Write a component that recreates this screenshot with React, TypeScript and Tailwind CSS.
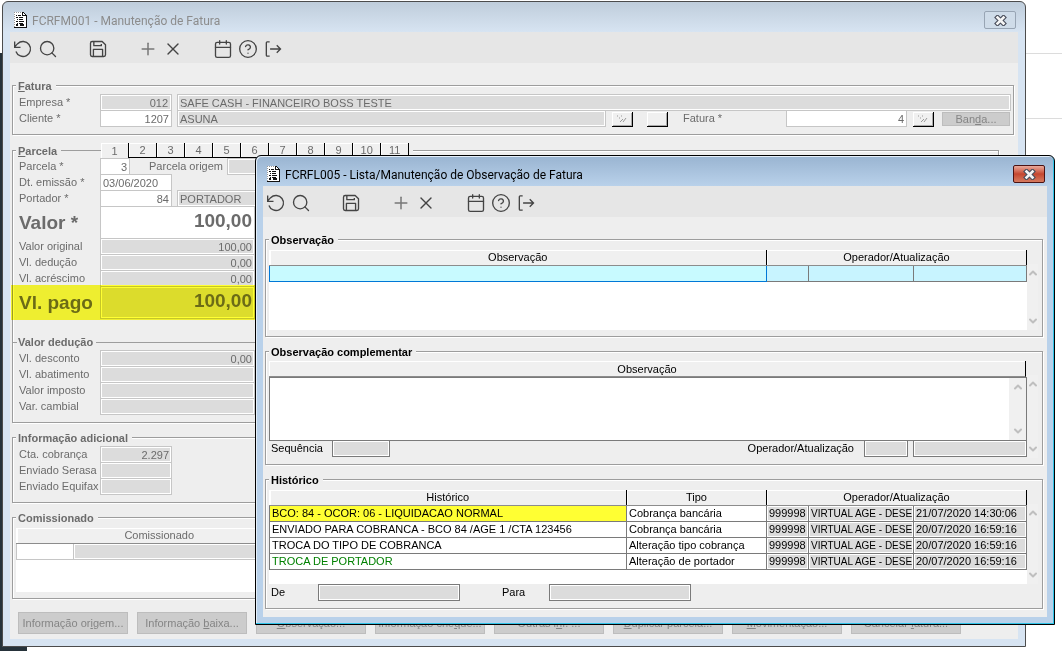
import type { ReactNode } from "react";
import { Calendar, ChevronDown, ChevronUp, CircleHelp, Plus, Search, X } from "lucide-react";
import clsx from "clsx";

const history = [
  { text: "BCO: 84 - OCOR: 06 - LIQUIDACAO NORMAL", type: "Cobrança bancária", date: "21/07/2020 14:30:06", color: "bg-[#ffff33]" },
  { text: "ENVIADO PARA COBRANCA - BCO 84 /AGE 1 /CTA 123456", type: "Cobrança bancária", date: "20/07/2020 16:59:16", color: "bg-white" },
  { text: "TROCA DO TIPO DE COBRANCA", type: "Alteração tipo cobrança", date: "20/07/2020 16:59:16", color: "bg-white" },
  { text: "TROCA DE PORTADOR", type: "Alteração de portador", date: "20/07/2020 16:59:16", color: "bg-white text-[#008000]" },
];

const tabs = [1, 2, 3, 4, 5, 6, 7, 8, 9, 10, 11];

const footerButtons = [
  ["Informação or", "i", "gem..."],
  ["Informação ", "b", "aixa..."],
  ["", "O", "bservação..."],
  ["Informação che", "q", "ue..."],
  ["Outras i", "n", "f. ..."],
  ["", "D", "uplicar parcela..."],
  ["", "M", "ovimentação..."],
  ["Cancelar ", "f", "atura..."],
];

function DocIcon() {
  return (
    <svg width="13" height="16" viewBox="0 0 13 16" shapeRendering="crispEdges">
      <path d="M0 0h9l3 3v12H0z" fill="#fff" />
      <path d="M0 15h13M12.5 3v12M9 .5h1M10 1.5h1M11 2.5h1M8.500 0v4M8 3.500h4" stroke="#111" fill="none" />
      <path d="M0 .5h8M.5 0v15" stroke="#999" strokeDasharray="1 1" />
      <path d="M2 3.500h1M4 3.500h3M2 5.500h2M5 5.500h4M3 7.500h1M5 7.500h4M2 9.500h2M5 9.500h5M3 11.500h1M5 11.500h4M2 13h2M6 13h4" stroke="#111" strokeWidth="1.500" />
    </svg>
  );
}

function UndoIcon() {
  return (
    <svg width="20" height="20" viewBox="0 0 24 24" fill="none" stroke="currentColor" strokeWidth="1.6">
      <path d="M2 3v7h7M3.5 15a9 9 0 1 0 2.100-9.400L2 9.500" />
    </svg>
  );
}

function SaveIcon() {
  return (
    <svg width="20" height="20" viewBox="0 0 24 24" fill="none" stroke="currentColor" strokeWidth="1.6" strokeLinejoin="round">
      <path d="M5 3h12l4 4v12a2 2 0 0 1-2 2H5a2 2 0 0 1-2-2V5a2 2 0 0 1 2-2zM17.500 21v-8.500h-11V21M7 3v5h9V6" />
    </svg>
  );
}

function ExitIcon() {
  return (
    <svg width="20" height="20" viewBox="0 0 24 24" fill="none" stroke="currentColor" strokeWidth="1.6">
      <path d="M8 3.500H5a1 1 0 0 0-1 1v15a1 1 0 0 0 1 1h3M8.500 12H21M16.500 7.500L21 12l-4.500 4.500" />
    </svg>
  );
}

function CloseGlyph() {
  return (
    <svg width="13" height="11" viewBox="0 0 13 11" fill="none">
      <path d="M3.500 2.500l6 6M9.500 2.500l-6 6" stroke="#4a4f5c" strokeWidth="4.800" strokeLinecap="square" />
      <path d="M3.500 2.500l6 6M9.500 2.500l-6 6" stroke="#f4f4f4" strokeWidth="2.600" strokeLinecap="square" />
    </svg>
  );
}

function ToolButton({ label, className, children }: { label: string; className?: string; children: ReactNode }) {
  return (
    <button type="button" aria-label={label} className={clsx("flex h-6 w-[25px] items-center justify-center text-[#444]", className)}>
      {children}
    </button>
  );
}

function Toolbar() {
  return (
    <div className="flex h-[31px] items-center bg-[#e6e6e6] pt-0.5">
      <ToolButton label="Desfazer"><UndoIcon /></ToolButton>
      <ToolButton label="Pesquisar"><Search size={20} strokeWidth={1.6} /></ToolButton>
      <ToolButton label="Salvar" className="ml-[25px]"><SaveIcon /></ToolButton>
      <ToolButton label="Incluir" className="ml-[25px] text-[#777]"><Plus size={20} strokeWidth={1.8} /></ToolButton>
      <ToolButton label="Excluir"><X size={20} strokeWidth={1.6} /></ToolButton>
      <ToolButton label="Calendário" className="ml-[25px]"><Calendar size={20} strokeWidth={1.6} /></ToolButton>
      <ToolButton label="Ajuda"><CircleHelp size={20} strokeWidth={1.6} /></ToolButton>
      <ToolButton label="Sair"><ExitIcon /></ToolButton>
    </div>
  );
}

function TitleBar({ title, active }: { title: string; active?: boolean }) {
  return (
    <div className="flex h-[30px] items-center pt-1.5 pr-0.5 pl-1">
      <DocIcon />
      <h1 className={clsx("ml-[5px] flex-1 pt-0.5 font-[Roboto,sans-serif] text-[12px] leading-4", active ? "text-black" : "text-[#8c8c8c]")}>{title}</h1>
      <button
        type="button"
        aria-label="Fechar"
        className={clsx(
          "flex h-[18px] w-8 items-center justify-center rounded-[2px] border",
          active
            ? "border-[#4b1313] bg-linear-to-b from-[#e9a99b] via-[#c4462f] to-[#d67a5f]"
            : "border-[#98a5b4] bg-[#cfdce9]"
        )}
      >
        <CloseGlyph />
      </button>
    </div>
  );
}

type FieldProps = { id: string; label?: string; value?: string; className?: string };

function Field({ id, label, value = "", className }: FieldProps) {
  return (
    <input
      id={id}
      aria-label={label}
      readOnly
      defaultValue={value}
      className={clsx("h-[17px] min-w-0 shrink-0 border px-[2px] outline-none", className)}
    />
  );
}

const grey = "border-[#c6c6c6] bg-[#dcdcdc] shadow-[inset_0_0_0_1px_#fff]";
const white = "border-[#c6c6c6] bg-white";
const darkGrey = "border-[#7a7a7a] bg-[#dcdcdc] shadow-[inset_0_0_0_1px_#fff]";

function Label({ id, children, className }: { id: string; children: ReactNode; className?: string }) {
  return (
    <label htmlFor={id} className={clsx("shrink-0 leading-4 whitespace-nowrap", className)}>
      {children}
    </label>
  );
}

function Row({ id, label, value, width = "w-[155px]", tone = grey }: { id: string; label: string; value?: string; width?: string; tone?: string }) {
  return (
    <div className="flex h-4">
      <Label id={id} className="w-[81px]">{label}</Label>
      <Field id={id} value={value} className={clsx("text-right", width, tone)} />
    </div>
  );
}

function Group({ legend, className, children }: { legend: ReactNode; className?: string; children: ReactNode }) {
  return (
    <fieldset className={clsx("min-w-0 border border-[#9d9d9d] pl-[3px] shadow-[1px_1px_0_#fff,inset_1px_1px_0_#fff]", className)}>
      <legend className="flex h-[15px] items-center bg-[#eee] pr-1 pl-[2px] font-bold">{legend}</legend>
      {children}
    </fieldset>
  );
}

function LookupButton({ blank, className }: { blank?: boolean; className?: string }) {
  return (
    <button
      type="button"
      aria-label={blank ? "Detalhes" : "Consultar"}
      className={clsx("mt-0.5 flex h-[15px] w-[21px] shrink-0 items-center justify-center border-r border-b border-black bg-[#f0f0f0] shadow-[inset_1px_1px_0_#fff,inset_-1px_-1px_0_#aaa]", className)}
    >
      {!blank && (
        <svg width="10" height="8" viewBox="0 0 10 8" stroke="#999">
          <path d="M0 1h1M2 3h1M4 1h1M3 7l3-3M6 7l3-4" strokeWidth="1" />
        </svg>
      )}
    </button>
  );
}

function ScrollArrows({ className }: { className?: string }) {
  return (
    <div className={clsx("flex shrink-0 flex-col items-center justify-between bg-[#f0f0f0] py-[3px] text-[#bfbfbf]", className)}>
      <ChevronUp size={12} strokeWidth={4} />
      <ChevronDown size={12} strokeWidth={4} />
    </div>
  );
}

const th = "h-[15px] border-r border-b border-r-black border-b-[#8c8c8c] bg-[#f0f0f0] p-0 text-center font-normal leading-[14px] shadow-[inset_1px_1px_0_#fff]";
const td = "h-4 overflow-hidden border border-[#7a7a7a] p-0 pl-[2px] leading-[15px] whitespace-nowrap";
const tdGrey = "bg-[#dcdcdc] shadow-[inset_0_0_0_1px_#fff]";

function WindowFrame({ title, active, className, children }: { title: string; active?: boolean; className: string; children: ReactNode }) {
  return (
    <section
      className={clsx(
        "rounded-t-md border px-[7px] pb-[7px]",
        active
          ? "border-black bg-[#b9d1ea] bg-[linear-gradient(#99b4d1,#b9d1ea_30px)] shadow-[inset_-1px_-1px_0_#2fc4e8,inset_1px_1px_0_#e4eef8]"
          : "border-[#4c4c4c] bg-[#d7e4f2] bg-[linear-gradient(#bfcddb,#d7e4f2_30px)]",
        className
      )}
    >
      <TitleBar title={title} active={active} />
      <div className="bg-[#eee]">
        <Toolbar />
        {children}
      </div>
    </section>
  );
}

function InvoiceWindow() {
  return (
    <WindowFrame title="FCRFM001 - Manutenção de Fatura" className="relative mt-px mr-9 ml-0.5 overflow-hidden text-[#6b6b6b]">
      <form className="pt-[15px] pr-1 pb-[5px] pl-0.5">
        <Group legend={<span><u>F</u>atura</span>} className="pt-px pr-[2px] pb-2">
          <div className="flex h-4 pl-[3px]">
            <Label id="empresa" className="w-[81px]">Empresa *</Label>
            <Field id="empresa" value="012" className={clsx("w-[72px] pr-[3px] text-right", grey)} />
            <Field id="empresa-nome" label="Nome da empresa" value="SAFE CASH - FINANCEIRO BOSS TESTE" className={clsx("ml-[5px] flex-1", grey)} />
          </div>
          <div className="flex h-4 pl-[3px]">
            <Label id="cliente" className="w-[81px]">Cliente *</Label>
            <Field id="cliente" value="1207" className={clsx("w-[72px] text-right", white)} />
            <Field id="cliente-nome" label="Nome do cliente" value="ASUNA" className={clsx("ml-[5px] flex-1", grey)} />
            <LookupButton className="ml-1.5" />
            <LookupButton blank className="ml-3.5" />
            <Label id="fatura" className="ml-[15px] w-[103px]">Fatura *</Label>
            <Field id="fatura" value="4" className={clsx("w-[121px] text-right", white)} />
            <LookupButton className="ml-1.5" />
            <button type="button" className="mt-0.5 mr-px ml-2 h-[14px] w-[68px] border border-[#bdbdbd] bg-[#ccc] leading-3 text-[#858585]">
              Ban<u>d</u>a...
            </button>
          </div>
        </Group>

        <Group
          className="mt-2 mr-[15px] pb-2"
          legend={
            <>
              <span className="pr-1"><u>P</u>arcela</span>
              <span className="h-px w-10 bg-[#9d9d9d]" />
              {tabs.map((tab) => (
                <button
                  key={tab}
                  type="button"
                  className={clsx(
                    "h-[15px] w-7 border-r border-black bg-[#f0f0f0] font-normal leading-[14px] shadow-[inset_1px_1px_0_#fff]",
                    tab > 1 && "border-b"
                  )}
                >
                  {tab}
                </button>
              ))}
            </>
          }
        >
          <div className="pl-[3px]">
            <div className="flex h-4">
              <Label id="parcela" className="w-[81px]">Parcela *</Label>
              <Field id="parcela" value="3" className={clsx("w-[30px] text-right", white)} />
              <Label id="origem" className="w-[97px] pr-1 text-right">Parcela origem</Label>
              <Field id="origem" className={clsx("w-[60px]", grey)} />
            </div>
            <div className="flex h-4">
              <Label id="emissao" className="w-[81px]">Dt. emissão *</Label>
              <Field id="emissao" value="03/06/2020" className={clsx("w-[72px]", white)} />
            </div>
            <div className="flex h-4">
              <Label id="portador" className="w-[81px]">Portador *</Label>
              <Field id="portador" value="84" className={clsx("w-[72px] text-right", white)} />
              <Field id="portador-nome" label="Nome do portador" value="PORTADOR" className={clsx("ml-[5px] w-[120px]", grey)} />
            </div>
            <div className="flex h-8">
              <label htmlFor="valor" className="w-[81px] shrink-0 text-[19px] leading-[34px] font-bold">Valor *</label>
              <input id="valor" readOnly defaultValue="100,00" className={clsx("h-[33px] w-[155px] border px-[2px] pb-1 text-right text-[19px] font-bold", white)} />
            </div>
            <Row id="original" label="Valor original" value="100,00" />
            <Row id="deducao" label="Vl. dedução" value="0,00" />
            <Row id="acrescimo" label="Vl. acréscimo" value="0,00" />
            <div className="relative flex h-8">
              <label htmlFor="pago" className="w-[81px] shrink-0 text-[19px] leading-[34px] font-bold whitespace-nowrap">Vl. pago</label>
              <input id="pago" readOnly defaultValue="100,00" className={clsx("h-[33px] w-[155px] border px-[2px] pb-1 text-right text-[19px] font-bold", grey)} />
              <div className="pointer-events-none absolute -top-px -left-2 h-[35px] w-[245px] bg-[#ffff33] mix-blend-multiply" />
            </div>
          </div>
          <div className="mt-4 -ml-[3px] flex h-4 items-center">
            <span className="h-px w-1 bg-[#9d9d9d]" />
            <h2 className="px-px font-bold">Valor dedução</h2>
            <span className="ml-0.5 h-px flex-1 bg-[#9d9d9d]" />
          </div>
          <div className="pl-[3px]">
            <Row id="desconto" label="Vl. desconto" value="0,00" />
            <Row id="abatimento" label="Vl. abatimento" />
            <Row id="imposto" label="Valor imposto" />
            <Row id="cambial" label="Var. cambial" />
          </div>
        </Group>

        <Group legend="Informação adicional" className="mt-[7px] mr-[15px] pt-px pb-2">
          <div className="pl-[3px]">
            <Row id="cobranca" label="Cta. cobrança" value="2.297" width="w-[72px]" />
            <Row id="serasa" label="Enviado Serasa" width="w-[72px]" />
            <Row id="equifax" label="Enviado Equifax" width="w-[72px]" />
          </div>
        </Group>

        <Group legend="Comissionado" className="mt-[7px] mr-[15px] pt-[3px] pb-1.5">
          <div className="h-16 w-[287px] bg-white">
            <table className="w-full table-fixed border-collapse">
              <colgroup>
                <col className="w-[57px]" />
                <col />
              </colgroup>
              <thead>
                <tr><th colSpan={2} className={th}>Comissionado</th></tr>
              </thead>
              <tbody>
                <tr>
                  <td className="h-4 border border-[#c6c6c6]" />
                  <td className="border border-[#c6c6c6] bg-[#dcdcdc] shadow-[inset_0_0_0_1px_#fff]" />
                </tr>
              </tbody>
            </table>
          </div>
        </Group>

        <div className="mt-[13px] ml-1.5 flex gap-[9px]">
          {footerButtons.map(([before, key, after]) => (
            <button key={before + key} type="button" className="h-[22px] w-[110px] border border-[#bdbdbd] bg-[#ccc] whitespace-nowrap text-[#858585]">
              {before}<u>{key}</u>{after}
            </button>
          ))}
        </div>
      </form>
    </WindowFrame>
  );
}

function NotesWindow() {
  return (
    <WindowFrame active title="FCRFL005 - Lista/Manutenção de Observação de Fatura" className="absolute top-[155px] right-[7px] left-[255px] text-black">
      <form className="pt-[15px] pr-1 pb-2 pl-0.5">
        <Group legend="Observação" className="pt-[3px] pb-1.5">
          <div className="flex">
            <div className="h-20 min-w-0 flex-1 bg-white">
              <table className="w-full table-fixed border-collapse">
                <colgroup>
                  <col />
                  <col className="w-[42px]" />
                  <col className="w-[105px]" />
                  <col className="w-[113px]" />
                </colgroup>
                <thead>
                  <tr>
                    <th className={th}>Observação</th>
                    <th colSpan={3} className={th}>Operador/Atualização</th>
                  </tr>
                </thead>
                <tbody>
                  <tr className="bg-[#c8f4ff]">
                    <td className="h-4 border border-[#0078d7] bg-[#c8faff]" />
                    <td className={td} />
                    <td className={td} />
                    <td className={td} />
                  </tr>
                </tbody>
              </table>
            </div>
            <ScrollArrows className="mt-3.5 mr-1 w-[11px]" />
          </div>
        </Group>

        <Group legend="Observação complementar" className="mt-[7px] pt-0.5 pb-1.5">
          <div className="flex">
            <div className="min-w-0 flex-1">
              <div className="mr-px h-4 border-r border-b border-r-black border-b-[#8c8c8c] bg-[#f0f0f0] text-center leading-4 shadow-[inset_1px_1px_0_#fff]">
                <label htmlFor="complementar">Observação</label>
              </div>
              <div className="flex h-16 border border-[#7a7a7a] bg-white">
                <textarea id="complementar" readOnly className="flex-1 resize-none outline-none" />
                <ScrollArrows className="w-[17px]" />
              </div>
              <div className="-mt-px flex h-[18px]">
                <Label id="sequencia" className="w-[63px] pl-[2px]">Sequência</Label>
                <Field id="sequencia" className={clsx("w-[58px]", darkGrey)} />
                <Label id="operador" className="mr-2.5 ml-auto">Operador/Atualização</Label>
                <Field id="operador" className={clsx("w-11", darkGrey)} />
                <Field id="operador-nome" label="Nome do operador" className={clsx("ml-[5px] w-[114px]", darkGrey)} />
              </div>
            </div>
            <ScrollArrows className="mt-3.5 mr-1 w-[11px]" />
          </div>
        </Group>

        <Group legend="Histórico" className="mt-[7px] pt-[3px] pb-[7px]">
          <div className="flex">
            <div className="h-[94px] min-w-0 flex-1 bg-white">
              <table className="w-full table-fixed border-collapse">
                <colgroup>
                  <col />
                  <col className="w-[140px]" />
                  <col className="w-[42px]" />
                  <col className="w-[105px]" />
                  <col className="w-[113px]" />
                </colgroup>
                <thead>
                  <tr>
                    <th className={th}>Histórico</th>
                    <th className={th}>Tipo</th>
                    <th colSpan={3} className={th}>Operador/Atualização</th>
                  </tr>
                </thead>
                <tbody>
                  {history.map((item) => (
                    <tr key={item.text}>
                      <td className={clsx(td, item.color)}>{item.text}</td>
                      <td className={clsx(td, "bg-white")}>{item.type}</td>
                      <td className={clsx(td, tdGrey)}>999998</td>
                      <td className={clsx(td, tdGrey, "text-[10px]")}>VIRTUAL AGE - DESE</td>
                      <td className={clsx(td, tdGrey)}>{item.date}</td>
                    </tr>
                  ))}
                </tbody>
              </table>
            </div>
            <ScrollArrows className="mt-3.5 mr-1 w-[11px]" />
          </div>
          <div className="flex h-[17px]">
            <Label id="de" className="w-[49px] pl-[2px]">De</Label>
            <Field id="de" className={clsx("w-[142px]", darkGrey)} />
            <Label id="para" className="ml-[42px] w-[47px]">Para</Label>
            <Field id="para" className={clsx("w-[142px]", darkGrey)} />
          </div>
        </Group>
      </form>
    </WindowFrame>
  );
}

export default function App() {
  return (
    <main className="relative flow-root min-h-screen bg-white font-['Liberation_Sans',Arial,sans-serif] text-[11px] leading-4">
      <div className="absolute top-[53px] bottom-0 left-0 w-[27px] bg-[#26323a]" />
      <div className="absolute top-[53px] right-0 w-10 border-t border-[#dcdcdc]" />
      <div className="absolute top-[118px] right-0 w-10 border-t border-[#dcdcdc]" />
      <InvoiceWindow />
      <NotesWindow />
    </main>
  );
}
